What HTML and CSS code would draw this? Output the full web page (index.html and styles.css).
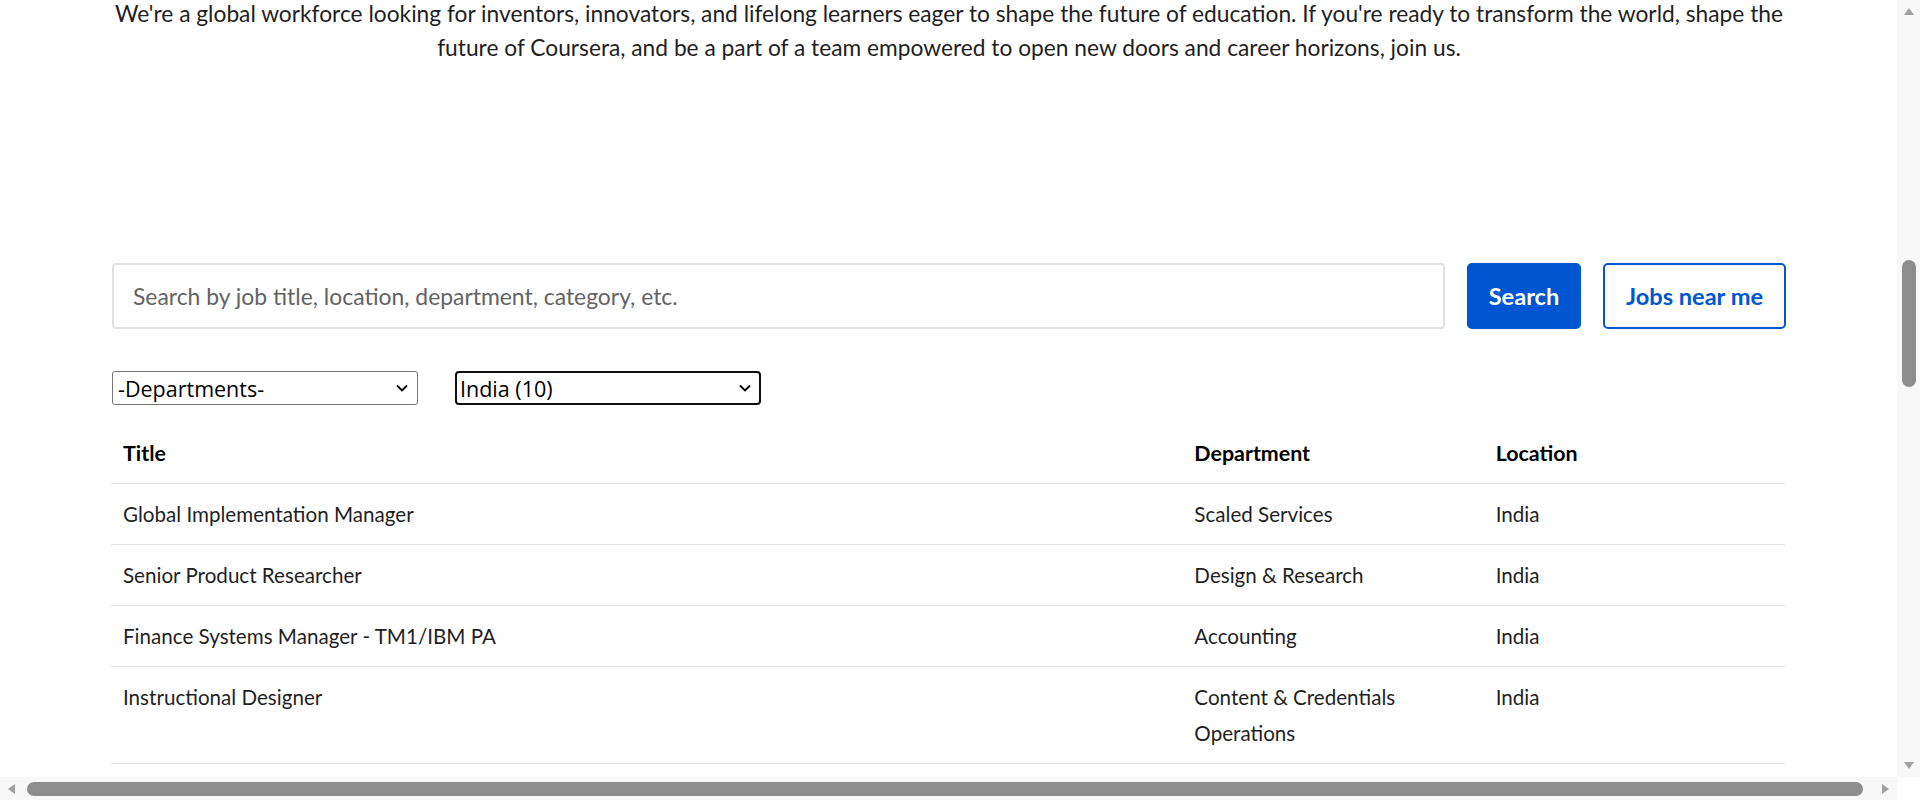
FILE: index.html
```html
<!DOCTYPE html>
<html lang="en">
<head>
<meta charset="utf-8">
<title>Careers at Coursera</title>
<link rel="stylesheet" href="styles.css">
</head>
<body>
<div class="window">
  <div class="content">
    <main class="page">
      <p class="intro">We're a global workforce looking for inventors, innovators, and lifelong learners eager to shape the future of education. If you're ready to transform the world, shape the future of Coursera, and be a part of a team empowered to open new doors and career horizons, join us.</p>

      <form class="search-row">
        <input class="search-input" type="text" placeholder="Search by job title, location, department, category, etc.">
        <button class="btn btn-primary" type="button">Search</button>
        <button class="btn btn-outline" type="button">Jobs near me</button>
      </form>

      <div class="filters">
        <span class="select-wrap">
          <select class="filter-select">
            <option>-Departments-</option>
          </select>
          <svg class="chev" viewBox="0 0 12 8" width="12" height="8"><path d="M1 1.5 6 6.5 11 1.5" fill="none" stroke="#000" stroke-width="1.9"/></svg>
        </span>
        <span class="select-wrap">
          <select class="filter-select is-active">
            <option>India (10)</option>
          </select>
          <svg class="chev" viewBox="0 0 12 8" width="12" height="8"><path d="M1 1.5 6 6.5 11 1.5" fill="none" stroke="#000" stroke-width="1.9"/></svg>
        </span>
      </div>

      <table class="jobs">
        <colgroup>
          <col class="c-title">
          <col class="c-dept">
          <col class="c-loc">
        </colgroup>
        <thead>
          <tr><th>Title</th><th>Department</th><th>Location</th></tr>
        </thead>
        <tbody>
          <tr><td>Global Implementation Manager</td><td>Scaled Services</td><td>India</td></tr>
          <tr><td>Senior Product Researcher</td><td>Design &amp; Research</td><td>India</td></tr>
          <tr><td>Finance Systems Manager - TM1/IBM PA</td><td>Accounting</td><td>India</td></tr>
          <tr><td>Instructional Designer</td><td>Content &amp; Credentials Operations</td><td>India</td></tr>
        </tbody>
      </table>
    </main>
  </div>

  <div class="vbar">
    <span class="sb-btn"><svg viewBox="0 0 10 7" width="10" height="7"><polygon points="5,0 10,7 0,7" fill="#a0a0a0"/></svg></span>
    <span class="sb-track sb-track-v"><span class="thumb thumb-v"></span></span>
    <span class="sb-btn"><svg viewBox="0 0 10 7" width="10" height="7"><polygon points="0,0 10,0 5,7" fill="#a0a0a0"/></svg></span>
  </div>

  <div class="hbar">
    <span class="sb-btn"><svg viewBox="0 0 7 10" width="7" height="10"><polygon points="7,0 7,10 0,5" fill="#a0a0a0"/></svg></span>
    <span class="sb-track sb-track-h"><span class="thumb thumb-h"></span></span>
    <span class="sb-btn"><svg viewBox="0 0 7 10" width="7" height="10"><polygon points="0,0 7,5 0,10" fill="#a0a0a0"/></svg></span>
  </div>

  <div class="corner"></div>
</div>
</body>
</html>
```
FILE: styles.css
```css
html, body {
  margin: 0;
  padding: 0;
  height: 100%;
  overflow: hidden;
  background: #fff;
}
body {
  font-family: "Source Sans Pro", Lato, "Noto Sans", sans-serif;
  color: #1f1f1f;
}

/* window: content + scrollbars */
.window {
  display: grid;
  grid-template-columns: 1fr 23px;
  grid-template-rows: 1fr 23px;
  height: 100vh;
  width: 100vw;
}
.content {
  overflow: hidden;
  background: #fff;
}
.vbar {
  display: flex;
  flex-direction: column;
  background: #f8f8f8;
}
.hbar {
  display: flex;
  flex-direction: row;
  background: #f8f8f8;
}
.corner {
  background: #fff;
}
.sb-btn {
  flex: 0 0 23px;
  display: flex;
  align-items: center;
  justify-content: center;
}
.sb-track {
  flex: 1;
  display: flex;
}
.sb-track-v {
  flex-direction: column;
}
.thumb {
  display: block;
  background: #8d8d8d;
  border-radius: 7px;
}
.thumb-v {
  margin: 237px 4px 0 5px;
  height: 127px;
}
.thumb-h {
  margin: 5px 0 4px 4px;
  width: 1836px;
}

/* page */
.page {
  width: 1674px;
  margin-left: 112px;
}
.intro {
  margin: -3px 0 0;
  font-size: 22.75px;
  line-height: 34px;
  text-align: center;
  color: #1f1f1f;
}
.search-row {
  display: flex;
  gap: 22px;
  margin-top: 198px;
  height: 66px;
}
.search-input {
  flex: 1;
  box-sizing: border-box;
  height: 66px;
  border: 2px solid #e1e1e1;
  border-radius: 4px;
  padding: 0 19px;
  font-family: inherit;
  font-size: 22.9px;
  color: #1f1f1f;
  outline: none;
}
.search-input::placeholder {
  color: #636363;
}
.btn {
  box-sizing: border-box;
  height: 66px;
  border-radius: 5px;
  font-family: inherit;
  font-weight: 700;
  font-size: 23.6px;
  padding: 0;
  cursor: pointer;
}
.btn-primary {
  background: #0056d2;
  color: #fff;
  border: 2px solid #0056d2;
  width: 114px;
}
.btn-outline {
  background: #fff;
  color: #0056d2;
  border: 2px solid #0056d2;
  width: 183px;
}
.filters {
  display: flex;
  gap: 37px;
  margin-top: 42px;
}
.select-wrap {
  position: relative;
  display: inline-block;
}
.filter-select {
  appearance: none;
  -webkit-appearance: none;
  box-sizing: border-box;
  width: 306px;
  height: 34px;
  padding: 0 30px 0 5px;
  border: 1px solid #767676;
  border-radius: 3px;
  background: #fff;
  font-family: "Open Sans", "Noto Sans", sans-serif;
  font-size: 21.5px;
  color: #000;
}
.filter-select.is-active {
  border: 2px solid #101010;
  border-radius: 4px;
  padding-left: 3px;
}
.chev {
  position: absolute;
  right: 10px;
  top: 13px;
  pointer-events: none;
}
.jobs {
  width: 1674px;
  margin-left: -1px;
  margin-top: 18px;
  border-collapse: collapse;
  table-layout: fixed;
  font-size: 20.6px;
  line-height: 36px;
}
.c-title { width: 64%; }
.c-dept { width: 18%; }
.c-loc { width: 18%; }
.jobs th,
.jobs td {
  text-align: left;
  vertical-align: top;
  padding: 12px 12px;
  border-bottom: 1px solid #dfe1e5;
}
.jobs th {
  font-weight: 700;
  font-size: 21.4px;
  color: #000;
}
.jobs td {
  font-weight: 400;
  color: #1f1f1f;
}
```
